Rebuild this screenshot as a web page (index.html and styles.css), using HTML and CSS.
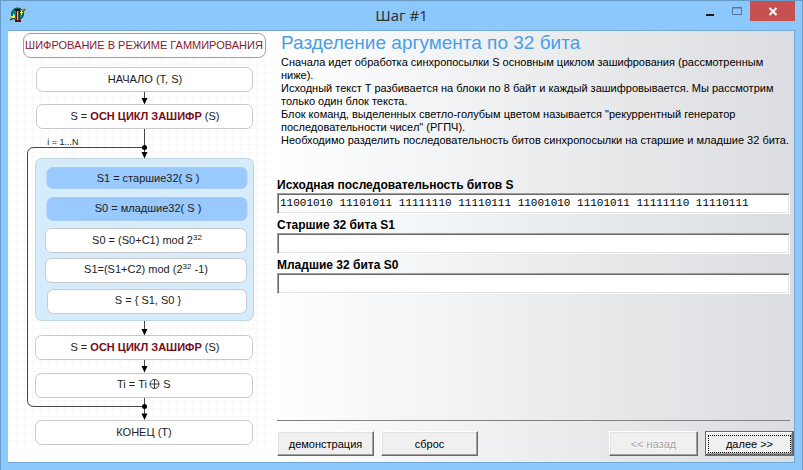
FILE: index.html
```html
<!DOCTYPE html>
<html lang="ru">
<head>
<meta charset="utf-8">
<title>Шаг #1</title>
<link rel="stylesheet" href="styles.css">
</head>
<body>
<div class="window">
  <header class="titlebar">
    <svg class="app-icon" width="16" height="16" viewBox="0 0 16 16" aria-hidden="true">
      <circle cx="7.500" cy="7" r="6" fill="#0b8583" stroke="#123c46"/>
      <path d="M0 13L5 9M10 6L15 2" fill="none" stroke="#222" stroke-width="2"/>
      <path d="M0 12.500L5 8M10 6L15 1.500" stroke="#d6d22a"/>
      <path d="M1 9h2v-2h1v2h1v2h-3zM10 5h1v-2h1v2h1v1h-1v2h-1v-2h-1z" fill="#f4ee28"/>
      <path d="M6.500 3.500h3v10h-3z" fill="#d9b98a" stroke="#3b2416"/>
      <path d="M8.500 4v9" stroke="#7b4c25"/>
      <path d="M5 13h6v2H5z" fill="#6b0d0d"/>
      <path d="M5 2h5v2H5z" fill="#111"/>
    </svg>
    <h1 class="window-title">Шаг #1</h1>
    <div class="window-controls">
      <button class="control" type="button" aria-label="Свернуть">
        <svg width="10" height="10" viewBox="0 0 10 10"><path d="M1 8h8v2H1z" fill="#1b1b1b"/></svg>
      </button>
      <button class="control" type="button" aria-label="Развернуть" disabled>
        <svg width="10" height="10" viewBox="0 0 10 10"><path d="M.5 1.500h9v7h-9z" fill="none" stroke="#557896"/><path d="M0 2h10" stroke="#557896"/></svg>
      </button>
      <button class="control control-close" type="button" aria-label="Закрыть">
        <svg width="10" height="10" viewBox="0 0 10 10"><path d="M1.500 2L8.500 9M8.500 2L1.500 9" stroke="#fff" stroke-width="2"/></svg>
      </button>
    </div>
  </header>
  <main class="client">
    <section class="scheme">
      <svg class="diagram" width="264" height="431" viewBox="8 31 264 431" role="img" aria-label="Схема шифрования">
        <defs>
          <pattern id="grid" width="8" height="8" patternUnits="userSpaceOnUse">
            <path d="M.5 0V8M0 .5H8" stroke="#f9f9f9"/>
          </pattern>
        </defs>
        <rect x="8" y="31" width="264" height="417" fill="url(#grid)"/>
        <g class="node">
          <rect class="node-title" x="23.500" y="33.500" width="242" height="24" rx="7"/>
          <rect x="36.500" y="67.500" width="216" height="24" rx="6"/>
          <rect x="36.500" y="104.500" width="216" height="24" rx="6"/>
          <rect class="cycle" x="35.500" y="158.500" width="218" height="162" rx="6"/>
          <rect class="active" x="47" y="167.500" width="200" height="21" rx="6"/>
          <rect class="active" x="47" y="197.500" width="200" height="23" rx="6"/>
          <rect x="45.500" y="228.500" width="201" height="24" rx="6"/>
          <rect x="45.500" y="258.500" width="201" height="24" rx="6"/>
          <rect x="47.500" y="289.500" width="199" height="24" rx="6"/>
          <rect x="35.500" y="335.500" width="217" height="24" rx="6"/>
          <rect x="35.500" y="373.500" width="217" height="24" rx="6"/>
          <rect x="35.500" y="420.500" width="217" height="24" rx="6"/>
        </g>
        <path class="link" d="M144.500 92V100M144.500 129V154M144.500 321V331M144.500 360V369M144.500 398V416M144.500 147.500H34Q27.500 147.500 27.500 154V400Q27.500 406.500 34 406.500H144.500"/>
        <path class="arrow" d="M141.500 98h6l-3 6.500zM141.500 152h6l-3 6.500zM141.500 329h6l-3 6.500zM141.500 366h6l-3 6.500zM141.500 413.500h6l-3 6.500z"/>
        <circle cx="144.500" cy="147.500" r="2.500"/>
        <circle cx="144.500" cy="406.500" r="2.500"/>
        <g class="caption">
          <text class="caption-title" x="144" y="49">ШИФРОВАНИЕ В РЕЖИМЕ ГАММИРОВАНИЯ</text>
          <text x="145" y="83">НАЧАЛО (T, S)</text>
          <text x="145" y="120">S = <tspan class="call">ОСН ЦИКЛ ЗАШИФР</tspan> (S)</text>
          <text class="note" x="63" y="145">i = 1...N</text>
          <text x="148" y="182">S1 = старшие32( S )</text>
          <text x="148" y="212">S0 = младшие32( S )</text>
          <text x="147" y="244">S0 = (S0+C1) mod 2<tspan class="power" dy="-4">32</tspan></text>
          <text x="146" y="273">S1=(S1+C2) mod (2<tspan class="power" dy="-4">32</tspan><tspan dy="4"> -1)</tspan></text>
          <text x="148" y="304">S = { S1, S0 }</text>
          <text x="145" y="351">S = <tspan class="call">ОСН ЦИКЛ ЗАШИФР</tspan> (S)</text>
          <text x="132" y="388">Ti = Ti</text>
          <text x="167" y="388">S</text>
          <text x="144" y="436">КОНЕЦ (T)</text>
        </g>
        <path d="M154.500 379.500V388.500M150 384H159M159 384a4.500 4.500 0 1 1-9 0a4.500 4.500 0 1 1 9 0" fill="none" stroke="#333"/>
      </svg>
    </section>
    <form class="step">
      <h2 class="heading">Разделение аргумента по 32 бита</h2>
      <p class="description">Сначала идет обработка синхропосылки S основным циклом зашифрования (рассмотренным<br>ниже).<br>Исходный текст T разбивается на блоки по 8 байт и каждый зашифровывается. Мы рассмотрим<br>только один блок текста.<br>Блок команд, выделенных светло-голубым цветом называется "рекуррентный генератор<br>последовательности чисел" (РГПЧ).<br>Необходимо разделить последовательность битов синхропосылки на старшие и младшие 32 бита.</p>
      <div class="fields">
        <label for="source">Исходная последовательность битов S</label>
        <input id="source" type="text" value="11001010 11101011 11111110 11110111 11001010 11101011 11111110 11110111">
        <label for="high">Старшие 32 бита S1</label>
        <input id="high" type="text">
        <label for="low">Младшие 32 бита S0</label>
        <input id="low" type="text">
      </div>
      <hr class="divider">
      <footer class="actions">
        <button class="button" type="button">демонстрация</button>
        <button class="button" type="reset">сброс</button>
        <button class="button button-nav back" type="button" disabled>&lt;&lt; назад</button>
        <button class="button button-nav button-default" type="button"><span>далее &gt;&gt;</span></button>
      </footer>
    </form>
  </main>
</div>
</body>
</html>
```

FILE: styles.css
```css
* {
  box-sizing: border-box;
}

body {
  margin: 0;
  font: 11px/13px "Liberation Sans", Arial, sans-serif;
  color: #000;
}

.window {
  display: flex;
  flex-direction: column;
  min-height: 100vh;
  padding: 0 7px 7px;
  border: 1px solid #679bc8;
  background: #8cc8fb;
}

.titlebar {
  display: grid;
  grid-template-columns: 1fr auto 1fr;
  height: 29px;
}

.app-icon {
  margin: 6px 0 0 2px;
}

.window-title {
  margin: 0;
  font: 15px/29px "Noto Sans", "Open Sans", sans-serif;
  color: #333;
}

.window-controls {
  display: flex;
  justify-content: flex-end;
  align-items: flex-start;
}

.control {
  display: flex;
  align-items: center;
  justify-content: center;
  width: 27px;
  height: 20px;
  padding: 0;
  border: 0;
  background: none;
}

.control-close {
  width: 45px;
  background: #c75050;
}

.client {
  display: flex;
  flex: 1;
  border: 1px solid #75aad8;
  border-width: 1px 1px 1px 0;
  background: #fff;
}

.scheme {
  flex: none;
}

.diagram {
  display: block;
}

.node rect {
  fill: #fff;
  stroke: #c9c9cc;
}

.node .node-title {
  stroke: #a39a9c;
}

.node .cycle {
  fill: #d6ecfb;
  stroke: #bdd3e3;
}

.node .active {
  fill: #99c9fd;
  stroke: #a5cdf5;
}

.link {
  fill: none;
  stroke: #444;
}

.caption {
  font-size: 11px;
  text-anchor: middle;
  fill: #222;
}

.caption-title {
  fill: #85202c;
}

.call {
  font-weight: bold;
  fill: #780c18;
}

.note {
  font-size: 9px;
}

.power {
  font-size: 8px;
}

.step {
  display: flex;
  flex: 1;
  flex-direction: column;
  min-width: 0;
  padding: 2px 0 6px 5px;
  background: linear-gradient(90deg, #fff, #f7f8f9 20%, #e9eaeb 60%, #dcdde2);
}

.heading {
  margin: 0 4px 3px;
  font-size: 19px;
  font-weight: normal;
  line-height: 20px;
  color: #4a9de8;
}

.description {
  margin: 0 0 31px 4px;
  white-space: nowrap;
}

.fields {
  display: flex;
  flex-direction: column;
  margin-right: 4px;
}

.fields label {
  font-size: 12px;
  font-weight: bold;
  line-height: 15px;
}

.fields input {
  width: 100%;
  height: 21px;
  margin: 0 0 4px;
  padding: 0 0 2px;
  border: 1px solid;
  border-color: #a0a0a0 #fff #fff #a0a0a0;
  background: #fff;
  box-shadow: inset 1px 1px #696969, inset -1px -1px #e3e3e3;
  padding-left: 2px;
  font: 11px "Liberation Mono", "Courier New", monospace;
}

.divider {
  width: auto;
  margin: auto 4px 10px 0;
  border: 0;
  border-top: 1px solid #808080;
}

.actions {
  display: flex;
  gap: 7px;
}

.button {
  width: 97px;
  height: 25px;
  padding: 0;
  border: 1px solid;
  border-color: #fff #696969 #696969 #fff;
  background: #f0f0f0;
  box-shadow: inset -1px -1px #a0a0a0, inset 1px 1px #e3e3e3;
  font: 11px "Liberation Sans", Arial, sans-serif;
  color: #000;
}

.button-nav {
  width: 89px;
}

.back {
  margin-left: auto;
}

.button:disabled {
  color: #a3a3a3;
  text-shadow: 1px 1px #fff;
}

.button-default {
  padding: 2px;
  border-color: #696969;
  box-shadow: inset -1px -1px #696969, inset 1px 1px #fff, inset -2px -2px #a0a0a0;
}

.button-default span {
  display: block;
  border: 1px dotted #000;
  line-height: 16px;
}
```
